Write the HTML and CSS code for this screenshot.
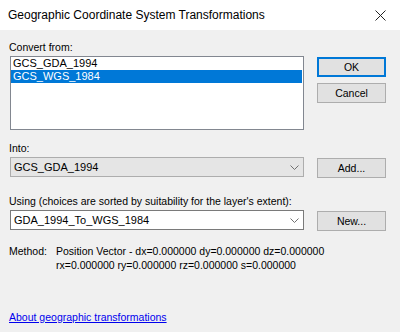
FILE: index.html
```html
<!DOCTYPE html>
<html>
<head>
<meta charset="utf-8">
<link rel="stylesheet" href="styles.css">
</head>
<body>
<div class="dialog">
  <div class="titlebar">
    <span class="title">Geographic Coordinate System Transformations</span>
    <svg class="close" width="11" height="11" viewBox="0 0 11 11"><path d="M0.5 0.5 L10.5 10.5 M10.5 0.5 L0.5 10.5" stroke="#222" stroke-width="1" fill="none"/></svg>
  </div>
  <div class="content">
    <div class="label first">Convert from:</div>
    <div class="row">
      <div class="listbox">
        <div class="item">GCS_GDA_1994</div>
        <div class="item selected">GCS_WGS_1984</div>
      </div>
      <div class="buttons">
        <div class="btn default">OK</div>
        <div class="btn">Cancel</div>
      </div>
    </div>

    <div class="label into">Into:</div>
    <div class="row">
      <div class="combo disabled">
        <span>GCS_GDA_1994</span>
        <svg class="chev" width="9" height="5" viewBox="0 0 9 5"><path d="M0.5 0.5 L4.5 4.5 L8.5 0.5" stroke="#707070" stroke-width="1" fill="none"/></svg>
      </div>
      <div class="buttons"><div class="btn">Add...</div></div>
    </div>

    <div class="label using">Using (choices are sorted by suitability for the layer's extent):</div>
    <div class="row">
      <div class="combo">
        <span>GDA_1994_To_WGS_1984</span>
        <svg class="chev" width="9" height="5" viewBox="0 0 9 5"><path d="M0.5 0.5 L4.5 4.5 L8.5 0.5" stroke="#707070" stroke-width="1" fill="none"/></svg>
      </div>
      <div class="buttons"><div class="btn">New...</div></div>
    </div>

    <div class="method">
      <div class="mlabel">Method:</div>
      <div class="mvalue">
        <div>Position Vector - dx=0.000000 dy=0.000000 dz=0.000000</div>
        <div>rx=0.000000 ry=0.000000 rz=0.000000 s=0.000000</div>
      </div>
    </div>

    <a class="link" href="#">About geographic transformations</a>
  </div>
</div>
</body>
</html>
```
FILE: styles.css
```css
* { box-sizing: border-box; }
html, body { margin: 0; padding: 0; }
body {
  width: 400px;
  height: 332px;
  background: #f0f0f0;
  font-family: "Liberation Sans", Arial, sans-serif;
  font-size: 10.5px;
  color: #000;
  overflow: hidden;
}
.dialog { width: 400px; height: 332px; display: flex; flex-direction: column; }
.titlebar {
  height: 30px;
  background: #fff;
  display: flex;
  align-items: center;
  justify-content: space-between;
  padding: 0 14px 0 8px;
}
.title { font-size: 12px; line-height: 16px; color: #000; }
.close { display: block; }
.content { padding: 9px 14px 0 9px; display: flex; flex-direction: column; }
.label { line-height: 16px; height: 16px; margin-bottom: 1px; }
.label.into { margin-top: 10px; }
.label.using { margin-top: 15px; }
.row { display: flex; gap: 13px; padding-left: 1px; }
.listbox {
  width: 294px;
  height: 74px;
  background: #fff;
  border: 1px solid #828790;
}
.item { line-height: 13px; height: 13px; padding-left: 2px; margin-right: 1px; font-size: 11px; }
.item.selected { background: #0078d7; color: #fff; }
.buttons { display: flex; flex-direction: column; gap: 6px; padding-top: 1px; }
.row .buttons:only-child { padding-top: 0; }
.btn {
  width: 69px;
  height: 20px;
  background: #e1e1e1;
  border: 1px solid #adadad;
  display: flex;
  align-items: center;
  justify-content: center;
  line-height: 16px;
}
.btn.default { border: 1px solid #0078d7; box-shadow: inset 0 0 0 1px #0078d7; }
.combo {
  width: 294px;
  height: 20px;
  background: #fff;
  border: 1px solid #7a7a7a;
  display: flex;
  align-items: center;
  justify-content: space-between;
  padding: 0 4px 0 3px;
  font-size: 11px;
}
.combo.disabled { background: #e5e5e5; border-color: #adadad; }
.chev { display: block; }
.method { display: flex; margin-top: 13px; line-height: 14px; }
.mlabel { width: 47px; }
.link {
  margin-top: 37px;
  line-height: 16px;
  color: #0000ee;
  text-decoration: underline;
  align-self: flex-start;
}
```
